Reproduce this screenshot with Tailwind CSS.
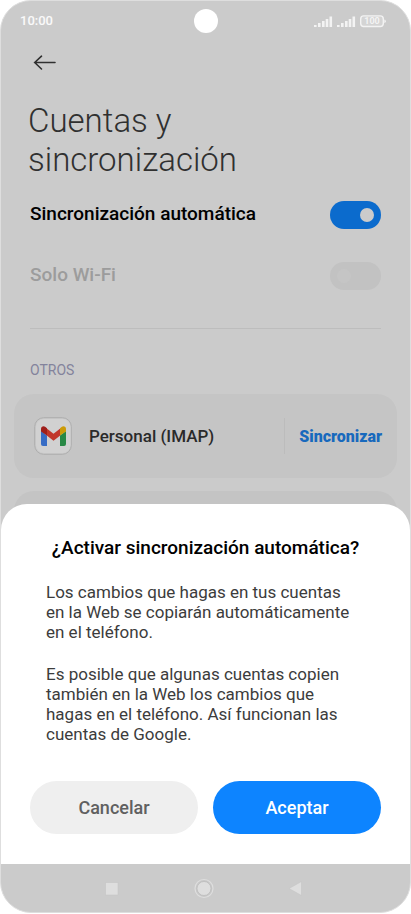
<!DOCTYPE html>
<html lang="es">
<head>
<meta charset="utf-8">
<meta name="viewport" content="width=device-width, initial-scale=1">
<title>Cuentas y sincronización</title>
<script src="https://cdn.jsdelivr.net/npm/@tailwindcss/browser@4"></script>
</head>
<body class="bg-white font-[Roboto,sans-serif]">
<div class="flex min-h-screen flex-col pb-px">
  <div class="flex grow flex-col overflow-hidden rounded-[31px] border border-[#dedede] bg-[#cbcbcb]">
    <div class="relative flex grow flex-col">
      <header class="relative flex h-10 items-center justify-between pr-6 pl-[19px] text-white">
        <time class="text-[13px] leading-5 font-medium text-white/90">10:00</time>
        <span class="absolute top-2 left-1/2 size-6 -translate-x-1/2 rounded-full bg-white"></span>
        <svg class="h-4 w-[73px]" viewBox="0 0 73 16" fill="#f3f3f3" role="img" aria-label="Señal y batería">
          <path d="M1 12h2.600v2H1zM5 10h2.600v4H5zM9 8h2.600v6H9zM12.700 6h2.600v8h-2.600zM16.500 3.500h2.600v10.500h-2.600z"/>
          <path d="M24 12h2.600v2H24zM28 10h2.600v4H28zM32 8h2.600v6H32zM35.700 6h2.600v8h-2.600zM39.500 3.500h2.600v10.500h-2.600z"/>
          <rect x="47.700" y="2.900" width="22.600" height="10.600" rx="3" fill="#d4d4d4" stroke="#f3f3f3" stroke-width="1.400"/>
          <path d="M71.300 6.500q1.500 .3 1.500 1.800t-1.500 1.800z"/>
          <text x="59" y="11.300" text-anchor="middle" font-size="9" font-weight="700" font-family="Roboto">100</text>
        </svg>
      </header>
      <main class="flex flex-col">
        <div class="px-[27px] pt-2">
          <button type="button" aria-label="Atrás" class="flex h-7 w-8 items-center">
            <svg class="h-4 w-7" viewBox="0 0 28 16" fill="none" stroke="#303030" stroke-width="1.600" stroke-linecap="round" stroke-linejoin="round"><path d="M6.500 7.500H27M13.500 1.200L6.700 7.500L13.500 14"/></svg>
          </button>
          <h1 class="mt-6 text-[33px] leading-[39px] font-light text-[#303030]">Cuentas y<br>sincronización</h1>
        </div>
        <div class="mt-[5px] px-[29px]">
          <label class="flex h-[61px] items-center justify-between text-[19px] font-medium text-black">Sincronización automática
            <input type="checkbox" role="switch" checked class="h-7 w-[51px] appearance-none rounded-full bg-[#0b6bcd] before:mt-[7px] before:ml-[30px] before:block before:size-[14px] before:rounded-full before:bg-[#cbcbcb]">
          </label>
          <label class="flex h-[61px] items-center justify-between text-[19px] font-medium text-[#9c9c9c]">Solo Wi-Fi
            <input type="checkbox" role="switch" disabled class="h-7 w-[51px] appearance-none rounded-full bg-[#c2c2c2] before:mt-[7px] before:ml-[7px] before:block before:size-[14px] before:rounded-full before:bg-[#c5c5c5]">
          </label>
          <hr class="mt-[22px] border-[#bdbdbd]">
          <h2 class="mt-[31px] text-sm leading-5 text-[#83839c]">OTROS</h2>
        </div>
        <section class="mx-[13px] mt-[14px] flex h-[84px] items-center rounded-[20px] bg-[#c5c5c5] pr-[15px] pl-5">
          <svg class="size-[38px]" viewBox="0 0 38 38" aria-hidden="true">
            <rect x=".7" y=".7" width="36.600" height="36.600" rx="9" fill="#c9c9c9" stroke="#aeaeae"/>
            <rect x="2" y="2" width="34.500" height="34" rx="8" fill="#d1d1d1"/>
            <path d="M7 14l6 4.500v10.500H9a2 2 0 0 1-2-2z" fill="#376cc5"/>
            <path d="M32 14L26 18.500v10.500h4a2 2 0 0 0 2-2z" fill="#288845"/>
            <path d="M12.800 11.500l6.700 5.200L26.200 11.500V18.500l-6.700 5.300L12.800 18.500z" fill="#c1372b"/>
            <path d="M7 14.500v-2.500c0-2.500 2.500-3.500 4.500-2L13 11.300V18.600z" fill="#9f1f1b"/>
            <path d="M32 14.500v-2.500c0-2.500-2.500-3.500-4.500-2L26 11.300V18.600z" fill="#cc9b08"/>
          </svg>
          <span class="ml-[17px] pt-0.5 text-[17px] font-medium text-[#2a2a2a]">Personal (IMAP)</span>
          <a href="#sincronizar" class="ml-auto flex h-9 items-center border-l border-[#bcbcbc] pt-0.5 pl-[14px] text-base font-black text-[#1869bd]">Sincronizar</a>
        </section>
        <section class="mx-[13px] mt-[13px] h-[85px] rounded-[20px] bg-[#c4c4c4]"></section>
      </main>
      <div role="dialog" aria-modal="true" aria-labelledby="dialog-title" class="absolute inset-x-0 bottom-0 rounded-t-[26px] bg-white px-[29px] pt-8 pb-[30px]">
        <h2 id="dialog-title" class="text-center text-[19px] leading-6 font-medium text-black">¿Activar sincronización automática?</h2>
        <div class="mt-[22px] flex flex-col gap-[22px] pr-5 pl-4 text-[17px] leading-5 text-[#3c3c3c]">
          <p>Los cambios que hagas en tus cuentas <br>en la Web se copiarán automáticamente en el teléfono.</p>
          <p>Es posible que algunas cuentas copien también en la Web los cambios que <br>hagas en el teléfono. Así funcionan las cuentas de Google.</p>
        </div>
        <div class="mt-[37px] grid grid-cols-2 gap-[15px] text-lg font-medium">
          <button type="button" class="h-[53px] rounded-full bg-[#efefef] text-[#606060]">Cancelar</button>
          <button type="button" class="h-[53px] rounded-full bg-[#0d84ff] text-white">Aceptar</button>
        </div>
      </div>
    </div>
    <nav class="flex h-12 items-center justify-center gap-[68px] pr-1">
      <button type="button" aria-label="Recientes"><svg class="size-6" viewBox="0 0 24 24"><path d="M5.500 6.500h12.500v12.500H5.500z" fill="#dedede" stroke="#c3c3c3" stroke-width=".5"/></svg></button>
      <button type="button" aria-label="Inicio"><svg class="size-6" viewBox="0 0 24 24"><circle cx="12" cy="12.500" r="9" fill="#c8c8c8" stroke="#dedede" stroke-width="1.200"/><circle cx="12" cy="12.500" r="7" fill="#dedede" stroke="#b9b9b9" stroke-width=".7"/></svg></button>
      <button type="button" aria-label="Volver"><svg class="size-6" viewBox="0 0 24 24"><path d="M17.500 5.500v14L5 12.500z" fill="#dedede" stroke="#c3c3c3" stroke-width=".5"/></svg></button>
    </nav>
  </div>
</div>
</body>
</html>
